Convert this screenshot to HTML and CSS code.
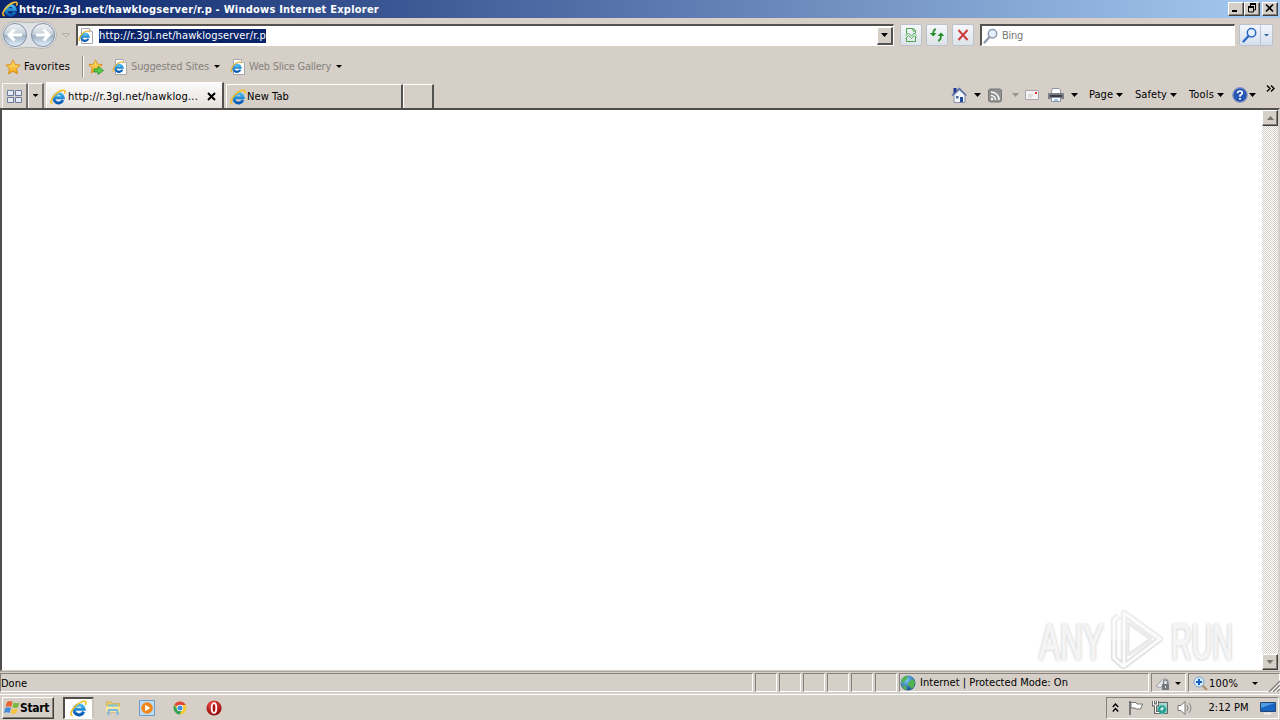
FILE: index.html
```html
<!DOCTYPE html>
<html lang="en">
<head>
<meta charset="utf-8">
<title>http://r.3gl.net/hawklogserver/r.p - Windows Internet Explorer</title>
<link rel="stylesheet" href="styles.css">
</head>
<body>
<svg class="defs" width="0" height="0">
  <defs>
    <linearGradient id="blue" x1="0" y1="0" x2="0" y2="1"><stop offset="0" stop-color="#45b9f0"/><stop offset="1" stop-color="#0759b4"/></linearGradient>
    <linearGradient id="orb" x1="0" y1="0" x2="0" y2="1"><stop offset="0" stop-color="#f2f5f8"/><stop offset=".48" stop-color="#c4ced9"/><stop offset=".52" stop-color="#9fb0c3"/><stop offset="1" stop-color="#e4f2fb"/></linearGradient>
    <linearGradient id="gold" x1="0" y1="0" x2="0" y2="1"><stop offset="0" stop-color="#ffe988"/><stop offset="1" stop-color="#f5a50c"/></linearGradient>
    <radialGradient id="globe" cx=".4" cy=".3" r=".7"><stop offset="0" stop-color="#7ccdf5"/><stop offset="1" stop-color="#164d94"/></radialGradient>
    <radialGradient id="red" cx=".4" cy=".25" r=".8"><stop offset="0" stop-color="#f0524a"/><stop offset="1" stop-color="#8c0508"/></radialGradient>
  </defs>
  <symbol id="ie" viewBox="0 0 16 16">
    <path d="M12.900 11A4.700 4.700 0 1 1 13.200 8.700H5" fill="none" stroke="url(#blue)" stroke-width="3"/>
    <path d="M2.600 14.600C-.8 14.800 1.200 9 6 4.800 10 1.200 15 .1 15.100 2.400c0 .8-.3 1.500-.8 2.200" fill="none" stroke="#f5c02c" stroke-width="1.600"/>
  </symbol>
  <symbol id="iepage" viewBox="0 0 16 16">
    <path d="M3.500.5h8l3 3v12h-11z" fill="#fff" stroke="#a5a7aa"/><path d="M11.500.5v3h3" fill="#e4e4e4" stroke="#b8b8b8"/>
    <path d="M10.300 10.600A3.600 3.600 0 1 1 10.500 8.500H4" fill="none" stroke="url(#blue)" stroke-width="2.300"/>
    <path d="M2 12.800C-.2 12 2 7.500 5.500 4.600 8 2.800 11.500 2.200 11.300 4.300" fill="none" stroke="#e7b02a" stroke-width="1.200"/>
  </symbol>
  <symbol id="star" viewBox="0 0 16 16"><path d="M8 .8l2.200 4.700 5 .6-3.700 3.500 1 5.200L8 12.300l-4.500 2.500 1-5.200L.8 6.100l5-.6z" fill="url(#gold)" stroke="#d58a15" stroke-width=".9"/></symbol>
  <symbol id="lens" viewBox="0 0 16 16"><path d="M1.500 14.500L6.500 9" stroke="currentColor" stroke-width="2.200" stroke-linecap="round"/><circle cx="9.500" cy="5.800" r="4.200" fill="#e5f1fc" stroke="currentColor" stroke-width="1.500"/></symbol>
</svg>

<header class="titlebar">
  <svg class="i16"><use href="#ie"/></svg>
  <span class="caption">http://r.3gl.net/hawklogserver/r.p - Windows Internet Explorer</span>
  <div class="winbtns">
    <i><svg width="13" height="11"><path d="M3 8h5" stroke="#000" stroke-width="2"/></svg></i>
    <i><svg width="13" height="11"><path d="M5 1.500h6M5.500 1v3M10.500 1v6H8M3 4.500h5M3.500 4v5h5V4" fill="none" stroke="#000"/><path d="M5 1h6M3 4h6" stroke="#000" stroke-width="2"/></svg></i>
    <i><svg width="13" height="11"><path d="M3 1.500l7 7M10 1.500l-7 7" stroke="#000" stroke-width="1.600"/></svg></i>
  </div>
</header>

<nav class="address-row">
  <svg class="orbs" width="74" height="34" viewBox="0 0 74 34">
    <path d="M15 3.500Q29 6 43 3.500a13.500 13.500 0 0 1 0 27Q29 28 15 30.500a13.500 13.500 0 0 1 0-27z" fill="#dfe1e4" stroke="#bab8b7"/>
    <g stroke="#7f90a5"><circle cx="15" cy="17" r="11.500" fill="url(#orb)"/><circle cx="43" cy="17" r="11.500" fill="url(#orb)"/></g>
    <path d="M22 17H9M14.500 11.500L9 17l5.500 5.500M36 17h13M43.500 11.500L49 17l-5.500 5.500" fill="none" stroke="#fff" stroke-width="3"/>
    <path d="M62.500 15.500h7l-3.500 3.500z" fill="#d8d4ce" stroke="#b2aea8"/>
  </svg>
  <div class="url sunk"><svg class="i16"><use href="#iepage"/></svg><span class="t sel">http://r.3gl.net/hawklogserver/r.p</span><b class="drop"><i class="arr"></i></b></div>
  <div class="soft"><svg class="i16" viewBox="0 0 16 16" fill="none" stroke="#4ca64c"><path d="M3.500 7V1.500h7l2 2V6M3.500 10v4.500h9V9.500M10 1.500V4h2.500"/><path d="M2.500 9l3-3 3 3 2.500-3 2.500 2M2.500 11.500l3-3 3 3 2.500-3 2.500 2" stroke-width=".9"/></svg></div>
  <div class="soft"><svg class="i16" viewBox="0 0 16 16" fill="none" stroke="#26902b" stroke-width="1.800"><path d="M7 2.500Q4.200 2 4.200 7M9 13.500q3 .5 3-6"/><path d="M.8 6h6.800L4.200 9.500zM8.500 9h6.800L12 5.500z" fill="#26902b" stroke="none"/></svg></div>
  <div class="soft"><svg class="i16" viewBox="0 0 16 16"><path d="M3.500 3l9 10M12.500 3l-9 10" stroke="#cf3c3c" stroke-width="2"/></svg></div>
  <div class="search sunk"><svg class="i16 pale"><use href="#lens"/></svg><span class="t bing">Bing</span></div>
  <div class="soft go"><svg class="i16"><use href="#lens"/></svg><b><i class="arr"></i></b></div>
</nav>

<div class="favorites">
  <svg class="i16"><use href="#star"/></svg><span class="t favt">Favorites</span><i class="sep"></i>
  <svg class="i16" viewBox="0 0 16 16"><use href="#star" width="15" height="15"/><path d="M6 10h4V7.500l5.500 4-5.500 4V13H6z" fill="#5ccb4a" stroke="#258f2a" stroke-width=".8"/></svg>
  <svg class="i16"><use href="#iepage"/></svg><span class="t dim sug">Suggested Sites</span><i class="arr"></i>
  <svg class="i16"><use href="#iepage"/></svg><span class="t dim web">Web Slice Gallery</span><i class="arr"></i>
</div>

<div class="tabs">
  <div class="quick"><svg class="i16" viewBox="0 0 16 16" fill="#e6ebf5" stroke="#6b7b9c"><path d="M.5 2.500h6v5h-6zM8.500 2.500h6v5h-6zM.5 9.500h6v5h-6zM8.500 9.500h6v5h-6z"/></svg></div>
  <div class="quick narrow"><i class="arr"></i></div>
  <div class="tab active"><svg class="i16"><use href="#ie"/></svg><span class="t tabt">http://r.3gl.net/hawklog...</span><svg class="x" width="9" height="9"><path d="M1 1l7 7M8 1L1 8" stroke="#000" stroke-width="2"/></svg></div>
  <div class="tab"><svg class="i16"><use href="#ie"/></svg><span class="t newt">New Tab</span></div>
  <div class="tab stub"></div>
  <div class="tools">
    <svg class="i16" viewBox="0 0 16 16"><path d="M3 8v7.500h11V8L8.500 3z" fill="#f4f7fc" stroke="#7e8fac"/><path d="M1 8.500L8.300 1.500l7 7" fill="none" stroke="#556fa5" stroke-width="1.500"/><path d="M2.500 1h3v3l-3 2.500z" fill="#26368d"/><path d="M9 10h3v5H9z" fill="#234c9d"/><path d="M5 9h2.500v2.500H5z" fill="#41689f"/></svg>
    <i class="arr"></i>
    <svg class="i16" viewBox="0 0 16 16"><rect x="1.500" y="2" width="13" height="13" rx="2" fill="#929292" stroke="#777"/><path d="M4 8.500a4.500 4.500 0 0 1 4.500 4.500M4 5a8 8 0 0 1 8 8" fill="none" stroke="#fff" stroke-width="1.500"/><circle cx="5" cy="12" r="1.200" fill="#fff"/></svg>
    <i class="arr faint"></i>
    <svg class="i16" viewBox="0 0 16 16"><path d="M1.500 3.500h13v9h-13z" fill="#f3f1f3" stroke="#aaa6aa"/><path d="M11 5h2v2h-2z" fill="#d33"/><path d="M4 8h5M4 10h4" stroke="#c9c7cb"/></svg>
    <svg class="i16" viewBox="0 0 16 16"><path d="M4 1.500h7l1.500 1.500v4h-9z" fill="#fff" stroke="#8d98a4"/><path d="M1 6h14q1 0 1 1v5H0V7q0-1 1-1z" fill="#7a7e86"/><path d="M2 9h12" stroke="#393c42" stroke-width="2"/><path d="M3.500 10.500h9v4h-9z" fill="#f6faff" stroke="#8997a5"/><path d="M6 13h4" stroke="#4d9bd4"/></svg>
    <i class="arr"></i>
    <span class="t page">Page</span><i class="arr"></i>
    <span class="t safe">Safety</span><i class="arr"></i>
    <span class="t tool">Tools</span><i class="arr"></i>
    <svg class="i16" viewBox="0 0 16 16"><circle cx="8" cy="8" r="7.300" fill="#2855b5" stroke="#8c9bc0" stroke-width="1.300"/><path d="M5.700 6.200Q5.700 4 8 4t2.300 2Q10.300 7 8 8.500v1.300" fill="none" stroke="#fff" stroke-width="1.700"/><path d="M7.100 11h1.800v1.700H7.100z" fill="#fff"/></svg>
    <i class="arr"></i>
    <svg class="chev" width="9" height="7"><path d="M1 .5l3 3-3 3M5 .5l3 3-3 3" fill="none" stroke="#000" stroke-width="1.400"/></svg>
  </div>
</div>

<main class="viewport">
  <div class="scroll"><b class="raised"><i class="arr up"></i></b><b class="raised"><i class="arr grey"></i></b></div>
  <div class="watermark">
    <span class="word any">ANY</span>
    <svg width="58" height="64" viewBox="0 0 58 64" fill="none" stroke-linejoin="round"><path d="M16 5L52 31 16 58zM21 17v28l20-14zM11 8L6 12v38l10 9" stroke="#ececec" stroke-width="6.500"/><path d="M16 32v26L52 31M6 32v18l10 9" stroke="#dfdfdf" stroke-width="5.500"/><path d="M16 5L52 31 16 58zM11 8L6 12v38l10 9" stroke="#fbfbfb" stroke-width="3"/><path d="M21 17v28l20-14z" fill="#fff" stroke="#e4e4e4" stroke-width="1"/></svg>
    <span class="word run">RUN</span>
  </div>
</main>

<footer class="status">
  <div class="pane"><span class="t done">Done</span></div>
  <div class="pane"></div><div class="pane"></div><div class="pane"></div><div class="pane"></div><div class="pane"></div><div class="pane"></div>
  <div class="pane zone"><svg class="i16" viewBox="0 0 16 16"><circle cx="8" cy="8" r="7.500" fill="url(#globe)"/><path d="M2 4q3-4 6-3L7 4 4 7 1 8zM9 7l4-3 2 3-1 5-3 2-1-3-3-1zM2 10l4 1 1 4-3-1z" fill="#54b44d"/></svg><span class="t prot">Internet | Protected Mode: On</span></div>
  <div class="pane lock"><svg class="i16" viewBox="0 0 16 16"><path d="M1 10l7-7q6-1 6 5l-6 1-3 3z" fill="#e4e6e9" stroke="#a0a1a4"/><path d="M7 8h7v6H7z" fill="#777980"/><path d="M8.500 8V6q0-2 2-2t2 2v2" fill="none" stroke="#85878c" stroke-width="1.300"/><path d="M10 10h1v2h-1z" fill="#ddd"/></svg><i class="arr"></i></div>
  <div class="pane zoom"><svg class="i16" viewBox="0 0 16 16"><path d="M9 9l5 5" stroke="#b49271" stroke-width="2.300"/><circle cx="6" cy="6" r="5" fill="#d9edff" stroke="#75a2d0"/><path d="M6 3v6M3 6h6" stroke="#1661c0" stroke-width="2"/></svg><span class="t pct">100%</span><i class="arr"></i></div>
  <svg class="grip" width="12" height="12"><path d="M1 12L12 1M5 12l7-7M9 12l3-3" stroke="#8a8782" stroke-width="1.500"/><path d="M3 12l9-9M7 12l5-5" stroke="#fff"/></svg>
</footer>

<div class="taskbar">
  <div class="start raised"><svg width="17" height="16" viewBox="0 0 17 16"><path d="M3 2q3-2 5.500 0L7.300 7Q5 5.500 1.500 7z" fill="#e96332"/><path d="M9.500 2.500q3 1.500 6-.2L14 7.200q-3 1.500-5.500 0z" fill="#78b83e"/><path d="M1.200 8q3-1.700 5.800 0L5.600 13Q3 11.500 0 13z" fill="#438bd5"/><path d="M8.200 8.200q3 1.700 5.600.2L12.300 13q-3 1.700-5.600 0z" fill="#f6c43d"/></svg><span class="startt">Start</span></div>
  <div class="running"><svg width="17" height="17"><use href="#ie"/></svg></div>
  <svg class="i16" viewBox="0 0 16 16"><path d="M1.500 2h5l1 1.500h7V12h-13z" fill="#e9c866" stroke="#d4b45d"/><path d="M3 4.500h10V8H3z" fill="#79bfd8"/><path d="M1 6.500h14V12H1z" fill="#f9e7a1"/><path d="M3.500 15v-4q0-1 1-1h7q1 0 1 1v4" fill="none" stroke="#78b5de" stroke-width="2"/></svg>
  <svg class="i16" viewBox="0 0 16 16"><path d="M.5.500h15v15H.5z" fill="#bcdcf3" stroke="#6c9ccb"/><circle cx="8" cy="8" r="5.800" fill="#f08819"/><path d="M6.200 4.800L11.200 8l-5 3.200z" fill="#fff"/></svg>
  <svg class="i16" viewBox="0 0 16 16"><circle cx="8" cy="8" r="6.500" fill="#f7cb35"/><path d="M8 8L2.400 4.700A6.500 6.500 0 0 1 13.700 5H8z" fill="#df4637"/><path d="M2.400 4.700A6.500 6.500 0 0 0 7.700 14.500L10.300 9.500 5.500 9.800z" fill="#35a35a"/><circle cx="8" cy="8" r="3.200" fill="#fff"/><circle cx="8" cy="8" r="2.500" fill="#458bdf"/></svg>
  <svg class="i16" viewBox="0 0 16 16"><circle cx="8" cy="8" r="7.600" fill="url(#red)"/><ellipse cx="8" cy="8" rx="2.300" ry="4.900" fill="#b71016" stroke="#fff" stroke-width="1.800"/></svg>
  <div class="tray">
    <svg width="7" height="10"><path d="M.8 4l2.700-3 2.700 3M.8 8.500l2.700-3 2.700 3" fill="none" stroke="#000" stroke-width="1.400"/></svg>
    <svg class="i16" viewBox="0 0 16 16"><path d="M2 1v14" stroke="#777" stroke-width="2"/><path d="M3 2.500h5l1 1.500h5.500l-2 5H8L7 8H3z" fill="#fff" stroke="#777"/></svg>
    <svg class="i16" viewBox="0 0 16 16"><path d="M4.500 2.500h11v11h-11z" fill="#a7d9cf" stroke="#5c6565"/><circle cx="10" cy="9.500" r="4.300" fill="#269e96" stroke="#63bfae"/><path d="M8 9q2-3 4-1l-2 3z" fill="#d4f1e6"/><path d="M1.500 1v4h4V1M3.500 5v7.500H7" fill="none" stroke="#666" stroke-width="3"/><path d="M1.500 1v4h4V1M3.500 5v7.500H7" fill="none" stroke="#fff"/></svg>
    <svg class="i16" viewBox="0 0 16 16"><path d="M1 5.500h3l4-4v13l-4-4H1z" fill="#fff" stroke="#777"/><path d="M10 5q2 3 0 6M12 3q4 5 0 10" fill="none" stroke="#858585"/></svg>
    <span class="t clock">2:12 PM</span>
    <svg class="i16" viewBox="0 0 16 16"><path d="M.5 2.500h15v9H.5z" fill="#1765be" stroke="#254777"/><path d="M1 3h14L1 8z" fill="#4f9be4"/><path d="M4 13.500h7" stroke="#eee" stroke-width="2"/></svg>
  </div>
</div>
<script src="fit.js"></script>
</body>
</html>
```

FILE: fit.js
```js
// Stretch every label to the advance width its slot was designed for.
document.querySelectorAll('.t, .caption, .startt').forEach(function (el) {
  var target = parseFloat(getComputedStyle(el).getPropertyValue('--w'));
  if (!target) return;
  var range = document.createRange();
  range.selectNodeContents(el);
  var natural = range.getBoundingClientRect().width;
  el.style.letterSpacing = (target - natural) / el.textContent.length + 'px';
});
```

FILE: styles.css
```css
* { box-sizing: border-box; }
body { margin: 0; width: 1280px; height: 720px; overflow: hidden; display: grid; grid-template-rows: 18px 34px 29px 27px 563px 24px 25px; background: #d5cfc8; color: #000; font: 11px/14px "DejaVu Sans Condensed", "DejaVu Sans", sans-serif; font-stretch: condensed; }
svg { display: block; flex: none; }
.defs { position: absolute; }
.i16 { width: 16px; height: 16px; }
i, b { display: block; font-style: normal; }
.t, .caption, .startt { display: block; width: calc(var(--w) * 1px); white-space: nowrap; flex: none; }
.arr { width: 6px; height: 3px; background: #000; clip-path: polygon(0 0, 100% 0, 50% 100%); flex: none; }
.faint { background: #99948e; }
.grey, .up { width: 7px; height: 4px; background: #77736e; }
.up { transform: rotate(180deg); }
.sunk { border: 1px solid #fff; border-top: 2px solid #54524f; border-left: 2px solid #54524f; background: #fff; }
.raised { background: #d5cfc8; border: 1px solid #fff; border-right-color: #3d3c39; border-bottom-color: #3d3c39; box-shadow: inset -1px -1px #85817c; }

.titlebar { display: flex; align-items: center; padding: 0 2px; background: linear-gradient(90deg, #0a246a, #a6caf0); color: #fff; font-weight: bold; }
.caption { --w: 360; margin: 1px 0 0 1px; }
.winbtns { display: flex; margin-left: auto; }
.winbtns i { width: 16px; height: 14px; background: #d5cfc8; border: 1px solid #fff; border-right-color: #404040; border-bottom-color: #404040; box-shadow: inset -1px -1px #85817c; }
.winbtns i:last-child { margin-left: 2px; }

.address-row { display: grid; grid-template-columns: 76px 819px 26px 26px 33px 259px 41px; align-items: center; }
.url { height: 22px; width: 818px; display: flex; align-items: center; }
.url .sel { --w: 167; margin-left: 5px; background: #0a246a; color: #fff; }
.drop { display: grid; place-items: center; width: 16px; height: 18px; margin-left: auto; background: #d5cfc8; border: 1px solid #fff; border-right: 2px solid #55534f; border-bottom: 2px solid #55534f; }
.drop .arr { width: 7px; height: 4px; }
.soft { display: grid; place-items: center; width: 22px; height: 22px; margin-left: 5px; background: linear-gradient(#f6f8fa, #dce3e9); border: 1px solid #bbc2ce; border-radius: 2px; }
.search { width: 255px; height: 22px; display: flex; align-items: center; padding-left: 1px; }
.pale { color: #8b99ab; }
.bing { --w: 21; color: #777; margin-left: 3px; }
.soft.go { width: 34px; display: flex; margin-left: 0; padding-left: 2px; background: linear-gradient(#f2f6fd, #d5dfed); color: #2868c4; }
.go b { display: grid; place-items: center; width: 13px; height: 20px; margin-left: 2px; border-left: 1px solid #bac4d4; }
.go .arr { background: #3064a8; }

.favorites { display: flex; align-items: center; padding-left: 5px; }
.favt { --w: 46; margin-left: 3px; }
.sep { width: 1px; height: 21px; background: #908c86; margin: 0 5px 0 12px; box-shadow: 1px 0 #fff; }
.favorites .i16 + .i16 { margin-left: 8px; }
.dim { color: #85827d; }
.sug { --w: 78; margin: 0 5px 0 3px; }
.web { --w: 82; margin: 0 5px 0 3px; }
.arr + .i16 { margin-left: 10px; }

.tabs { display: flex; padding-left: 2px; align-items: stretch; }
.quick { display: grid; place-items: center; width: 26px; margin: 2px 0 0; padding-bottom: 1px; border-top: 1px solid #f7f6f4; border-right: 2px solid #74726f; border-left: 1px solid #f7f6f4; }
.narrow { width: 16px; }
.tab { display: flex; align-items: center; width: 177px; margin: 3px 0 0; border: 1px solid #fff; border-right: 2px solid #54524f; border-bottom: 0; padding: 1px 0 0 3px; }
.tab.active { width: 178px; margin: 1px 0 0 2px; padding: 2px 6px 0 3px; background: linear-gradient(#fbfafa, #e5e1dd); }
.tab.active + .tab { margin-left: 2px; }
.tab.stub { width: 31px; }
.tabt { --w: 130; margin-left: 2px; }
.newt { --w: 42; margin-left: 1px; }
.x { margin-left: auto; }
.tools { display: grid; grid-template-columns: 23px 13px 25px 12px 24px 23px 17px 28px 18px 36px 18px 29px 15px 17px 17px 10px; align-items: center; height: 27px; padding-top: 1px; margin-left: 517px; }
.tools .arr { width: 7px; height: 4px; }
.chev { align-self: start; margin-top: 3px; }
.tools .arr + .i16 { margin-left: 0; }
.page { --w: 24; }
.safe { --w: 32; }
.tool { --w: 25; }
.page, .safe, .tool { margin-left: 1px; }

.viewport { display: grid; border: 2px solid #504e4b; border-bottom: 1px solid #d5cfc8; border-right-color: #d5cfc8; background: #fff; }
.viewport > * { grid-area: 1 / 1; }
.scroll { justify-self: end; width: 16px; display: flex; flex-direction: column; justify-content: space-between; background: repeating-conic-gradient(#fff 0 25%, #d5cfc8 0 50%) 0 0 / 2px 2px; }
.scroll b { display: grid; place-items: center; width: 16px; height: 16px; }
.watermark { place-self: end; display: grid; grid-template-columns: 66px 66px 62px; align-items: center; width: 194px; height: 64px; margin: 0 45px -2px 0; }
.word { width: 0; margin-top: 3px; color: #f6f6f6; font: 50px/50px "Liberation Sans", sans-serif; -webkit-text-stroke: 2px #f3f3f3; text-shadow: 0 0 3px #bcbcbc, 0 1px 4px #cacaca; transform-origin: 0 50%; }
.any { transform: scaleX(.63); }
.run { transform: scaleX(.57); }
.watermark svg { margin-left: 3px; }

.status { display: flex; padding: 1px 0 2px; border-top: 1px solid #aaa6a1; border-bottom: 1px solid #fff; position: relative; }
.pane { width: 22px; margin-right: 2px; padding-top: 2px; display: flex; align-items: center; border-top: 1px solid #85817c; border-left: 1px solid #85817c; border-right: 1px solid #fff; border-bottom: 1px solid #fff; }
.pane:first-child { width: 753px; }
.done { --w: 26; }
.pane.zone { width: 250px; padding: 0; }
.prot { --w: 148; margin: 1px 0 0 4px; }
.lock { width: 35px; padding-left: 3px; }
.lock .arr { margin-left: 4px; }
.zoom { width: 92px; margin: 0; padding-left: 4px; }
.pct { --w: 29; }
.zoom .arr { margin-left: 14px; }
.grip { position: absolute; right: 0; bottom: 2px; }

.taskbar { display: flex; align-items: center; padding-left: 2px; }
.start { display: flex; align-items: center; width: 52px; height: 22px; padding-left: 1px; font-weight: bold; }
.startt { --w: 29; font-size: 12px; margin-left: -1px; }
.running { display: grid; place-items: center; width: 31px; height: 22px; margin: 0 11px 0 9px; background: #fff; border: 1px solid #fff; border-top: 2px solid #504e4b; border-left: 2px solid #504e4b; border-right: 2px solid #c9c3bc; }
.taskbar > .i16 { margin-right: 17.500px; }
.tray { display: flex; align-items: center; width: 173px; height: 22px; margin-left: auto; margin-right: 1px; padding-left: 5px; border: 1px solid #fff; border-top-color: #85817c; border-left-color: #85817c; }
.tray .i16 { margin-left: 8.500px; }
.clock { --w: 40; margin-left: 16px; }
.tray .clock + .i16 { margin-left: 11px; }
```
